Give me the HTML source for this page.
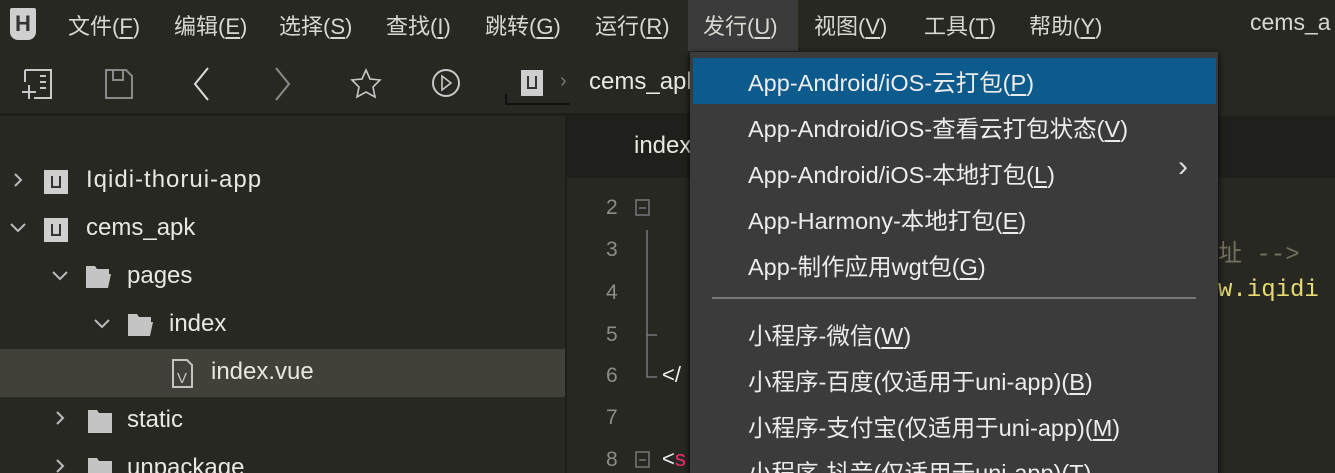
<!DOCTYPE html>
<html><head><meta charset="utf-8"><style>
*{margin:0;padding:0;box-sizing:border-box}
html,body{width:1335px;height:473px;overflow:hidden}
body{background:#272822;font-family:"Liberation Sans","Noto Sans CJK SC",sans-serif;color:#e6e6e0;position:relative}
.a{position:absolute;white-space:nowrap}
.mb{font-size:22px;color:#d8d8d2;top:9px}
.tree{font-size:24px;color:#e8e8e2}
.ln{font-size:21px;color:#8d8d86;font-family:"Liberation Sans",sans-serif}
.menu{position:absolute;left:690px;top:52px;width:528px;height:421px;background:#3b3b3b;box-shadow:0 2px 6px #000;overflow:hidden}
.mi{position:absolute;left:58px;font-size:23.5px;color:#ececec}
u{text-decoration:underline;text-underline-offset:3px}
.ico{position:absolute;border:2px solid #bbb}
</style></head><body>
<div class="a" style="left:10px;top:8px;width:26px;height:32px;background:#cfcfcf;border-radius:2px 2px 8px 8px;color:#333;font-size:22px;text-align:center;line-height:32px;font-weight:bold">H</div>
<div class="a mb" style="left:68px">文件(<u>F</u>)</div>
<div class="a mb" style="left:174px">编辑(<u>E</u>)</div>
<div class="a mb" style="left:279px">选择(<u>S</u>)</div>
<div class="a mb" style="left:386px">查找(<u>I</u>)</div>
<div class="a mb" style="left:485px">跳转(<u>G</u>)</div>
<div class="a" style="left:688px;top:0;width:110px;height:51px;background:#3b3b3b"></div>
<div class="a mb" style="left:595px">运行(<u>R</u>)</div>
<div class="a mb" style="left:703px">发行(<u>U</u>)</div>
<div class="a mb" style="left:814px">视图(<u>V</u>)</div>
<div class="a mb" style="left:924px">工具(<u>T</u>)</div>
<div class="a mb" style="left:1029px">帮助(<u>Y</u>)</div>
<div class="a mb" style="left:1250px;font-size:23px">cems_a</div>
<svg class="a" style="left:0;top:52px" width="700" height="62" fill="none" stroke="#c8c8c8" stroke-width="2">
<path d="M25 18h26v28H34M40 24h6M40 30h6M40 36h6M25 18v12M22 40h14M29 33v14"/>
<path d="M106 18h20l6 6v22h-26zM113 18v10h10V18" stroke="#8a8a8a"/>
<path d="M208 16l-13 16 13 16" stroke="#ddd"/>
<path d="M276 16l13 16-13 16" stroke="#8a8a8a"/>
<path d="M366 18l4 9 10 1-7 7 2 10-9-5-9 5 2-10-7-7 10-1z" stroke-width="1.6"/>
<circle cx="446" cy="31" r="13"/><path d="M442 24v14l9-7z" stroke-width="1.6"/>
<path d="M506 42v10h64" stroke="#111" stroke-width="2"/>
</svg>
<div class="a" style="left:521px;top:70px;width:22px;height:26px;background:#cfcfcf"><div style="position:absolute;left:6px;top:6px;width:10px;height:13px;border:2px solid #333;border-top:none"></div></div>
<div class="a" style="left:560px;top:70px;color:#777;font-size:20px">›</div>
<div class="a" style="left:589px;top:68px;font-size:24px;color:#e8e8e2">cems_apk</div>
<div class="a" style="left:0;top:113px;width:690px;height:3px;background:#1d1e19"></div>
<div class="a" style="left:565px;top:116px;width:2px;height:357px;background:#1d1e19"></div>
<div class="a" style="left:0;top:349px;width:565px;height:48px;background:#414139"></div>
<svg class="a" style="left:0;top:160px" width="260" height="313" fill="none" stroke="#bbb" stroke-width="2">
<path d="M15 14l6 6-6 6M11 64l7 7 7-7M53 112l7 7 7-7M95 160l7 7 7-7M57 252l6 6-6 6M57 300l6 6-6 6"/>
</svg>
<div class="ico" style="left:44px;top:170px;width:24px;height:24px;background:#cfcfcf;border:none"><div style="position:absolute;left:7px;top:6px;width:10px;height:12px;border:2px solid #333;border-top:none"></div></div>
<div class="ico" style="left:44px;top:218px;width:24px;height:24px;background:#cfcfcf;border:none"><div style="position:absolute;left:7px;top:6px;width:10px;height:12px;border:2px solid #333;border-top:none"></div></div>
<div class="a tree" style="left:86px;top:166px;letter-spacing:1px">Iqidi-thorui-app</div>
<div class="a tree" style="left:86px;top:214px">cems_apk</div>
<svg class="a" style="left:0;top:250px" width="200" height="223" fill="#c4c4c4">
<path d="M86 16h9l2 3h12v5H92l-3 14h-3z"/><path d="M91 24h20l-3 14H88z"/>
<path d="M128 64h9l2 3h12v5h-17l-3 14h-3z"/><path d="M133 72h20l-3 14h-20z"/>
<path d="M88 160h9l2 3h13v20H88z"/><path d="M88 208h9l2 3h13v12H88z"/>
<path d="M173 110h14l5 5v22h-19z" fill="none" stroke="#c4c4c4" stroke-width="2"/>
<text x="177" y="133" font-size="15" fill="#c4c4c4" font-family="Liberation Sans">V</text>
</svg>
<div class="a tree" style="left:127px;top:262px">pages</div>
<div class="a tree" style="left:169px;top:310px">index</div>
<div class="a tree" style="left:211px;top:358px">index.vue</div>
<div class="a tree" style="left:127px;top:406px">static</div>
<div class="a tree" style="left:127px;top:454px">unpackage</div>
<div class="a" style="left:567px;top:116px;width:768px;height:62px;background:#1f201b"></div>
<div class="a tree" style="left:634px;top:132px">index</div>
<div class="a ln" style="left:606px;top:196px">2</div>
<div class="a ln" style="left:606px;top:238px">3</div>
<div class="a ln" style="left:606px;top:281px">4</div>
<div class="a ln" style="left:606px;top:323px">5</div>
<div class="a ln" style="left:606px;top:364px">6</div>
<div class="a ln" style="left:606px;top:406px">7</div>
<div class="a ln" style="left:606px;top:448px">8</div>
<svg class="a" style="left:630px;top:190px" width="70" height="283" fill="none" stroke="#777" stroke-width="1.5">
<rect x="6" y="10" width="13" height="15"/><path d="M9 18h7M17 40v147h10M17 145h10"/>
<rect x="6" y="262" width="13" height="15"/><path d="M9 270h7"/>
</svg>
<div class="a" style="left:662px;top:362px;font-size:22px;color:#eee">&lt;/</div>
<div class="a" style="left:662px;top:446px;font-size:22px;color:#eee">&lt;<span style="color:#f92672">s</span></div>
<div class="a" style="left:1218px;top:233px;font-size:24px;color:#75715e;font-family:'Liberation Mono','Noto Sans CJK SC',monospace">址 --&gt;</div>
<div class="a" style="left:1218px;top:277px;font-size:24px;color:#e6db74;font-family:'Liberation Mono',monospace">w.iqidi</div>
<div class="menu">
<div class="a" style="left:3px;top:6px;width:523px;height:46px;background:#0d5a8c"></div>
<div class="mi" style="top:12px">App-Android/iOS-云打包(<u>P</u>)</div>
<div class="mi" style="top:58px">App-Android/iOS-查看云打包状态(<u>V</u>)</div>
<div class="mi" style="top:104px">App-Android/iOS-本地打包(<u>L</u>)</div>
<div class="a" style="left:488px;top:98px;font-size:30px;color:#ddd">›</div>
<div class="mi" style="top:150px">App-Harmony-本地打包(<u>E</u>)</div>
<div class="mi" style="top:196px">App-制作应用wgt包(<u>G</u>)</div>
<div class="a" style="left:22px;top:245px;width:484px;height:2px;background:#777"></div>
<div class="mi" style="top:265px">小程序-微信(<u>W</u>)</div>
<div class="mi" style="top:311px">小程序-百度(仅适用于uni-app)(<u>B</u>)</div>
<div class="mi" style="top:357px">小程序-支付宝(仅适用于uni-app)(<u>M</u>)</div>
<div class="mi" style="top:402px">小程序-抖音(仅适用于uni-app)(<u>T</u>)</div>
</div>
</body></html>
